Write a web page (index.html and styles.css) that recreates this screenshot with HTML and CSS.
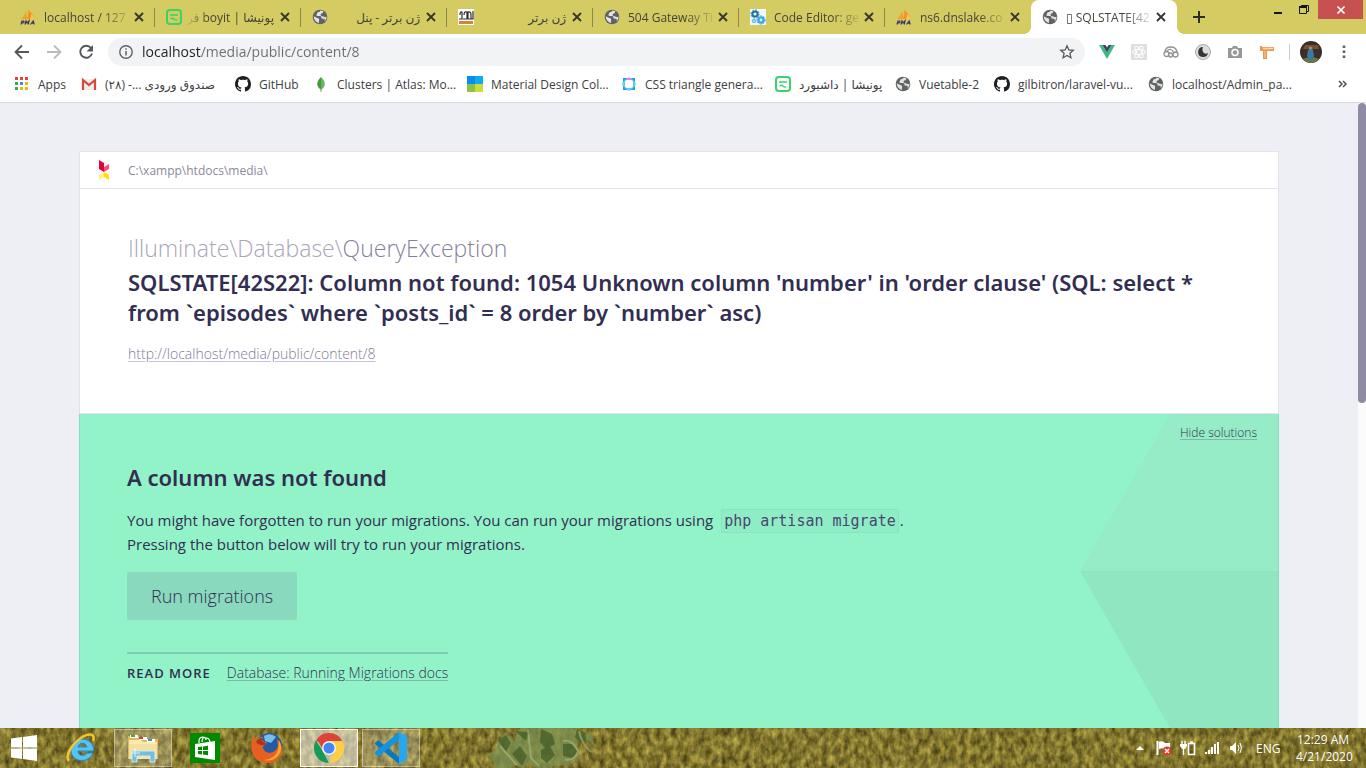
FILE: index.html
```html
<!DOCTYPE html>
<html lang="en">
<head>
<meta charset="utf-8">
<title>SQLSTATE[42S22]: Column not found</title>
<link rel="stylesheet" href="styles.css">
</head>
<body>
<svg class="sprite" aria-hidden="true">
  <symbol id="pma" viewBox="0 0 16 16">
    <path d="M1 10C3 8 5 6 6 2c1 3 1 5 1 8z" fill="#f5a030"/><path d="M7 10c1-3 2-6 1-9 4 3 6 6 7 9z" fill="#f98f1d"/><path d="M10 10c1-2 1-4 1-5 2 1 3 3 4 5z" fill="#fbc35c"/>
    <path d="M1 15.500 2 12h1.600q1 .8-.5 1.800H1.700M5 15.500 6 12l1 2 2-2-.8 3.500M10.500 15.500l2.700-3.500 1 3.500M11.600 14.200h2.500" fill="none" stroke="#35356b" stroke-width="1.200"/>
  </symbol>
  <symbol id="ponisha" viewBox="0 0 16 16">
    <rect x="1" y="1" width="14" height="14" rx="3" fill="none" stroke="#3bd26a" stroke-width="2"/>
    <path d="M4 6h8M4.500 9.500h3q1 2 3.500 1.500" fill="none" stroke="#3bd26a" stroke-width="1.500"/>
  </symbol>
  <symbol id="globe" viewBox="0 0 16 16">
    <circle cx="8" cy="8" r="7.300" fill="#5f6368"/>
    <path d="M8.500 1.500c-.5 1.500-1 1.500-2.500 1.800S5.500 5 4.500 5.500c-.5 1.500.5 1.500 2.500 1.500s2.500.5 2.500 1.800 1.500.7 2.500.9 1 1.500.3 2.800c1.500-1.200 2.300-2.900 2.200-5-1 .8-1.800.8-2.500.3-1-.7-2.500-.3-3.200-1.300s.3-2 1.500-2.200c.8-.2.6-1.500 1.200-2zM1.800 7.300c0 3 1.500 5.400 4.800 6.700 1-.7-.2-1.500.4-2.500s0-1.800-1-2.200S3.500 8.500 1.800 7.300z" fill="#e5e5df"/>
  </symbol>
  <symbol id="close" viewBox="0 0 12 12"><path d="m2 2 8 8m0-8-8 8" stroke="#33342d" stroke-width="1.800"/></symbol>
  <symbol id="github" viewBox="0 0 16 16">
    <path fill-rule="evenodd" fill="#1b1f23" d="M8 0C3.580 0 0 3.580 0 8c0 3.540 2.290 6.530 5.470 7.590.4.070.55-.17.55-.38 0-.19-.01-.82-.01-1.490-2.010.37-2.530-.49-2.690-.94-.09-.23-.48-.94-.82-1.130-.28-.15-.68-.52-.01-.53.63-.01 1.080.58 1.230.82.72 1.210 1.870.87 2.330.66.07-.52.28-.87.51-1.070-1.780-.2-3.640-.89-3.640-3.950 0-.87.31-1.590.82-2.150-.08-.2-.36-1.020.08-2.120 0 0 .67-.21 2.200.82.64-.18 1.320-.27 2-.27s1.360.09 2 .27c1.530-1.040 2.200-.82 2.200-.82.44 1.100.16 1.920.08 2.120.51.56.82 1.270.82 2.150 0 3.070-1.870 3.750-3.650 3.950.29.25.54.73.54 1.480 0 1.070-.01 1.930-.01 2.200 0 .21.15.46.55.38A8.013 8.013 0 0 0 16 8c0-4.420-3.580-8-8-8z"/>
  </symbol>
</svg>

<div class="desktop">
  <div class="browser">
    <header class="tabstrip">
      <div class="tab"><svg class="icon"><use href="#pma"/></svg><span class="tab-title fade">localhost / 127</span><button class="tab-close" aria-label="Close tab"><svg><use href="#close"/></svg></button></div>
      <div class="tab"><svg class="icon"><use href="#ponisha"/></svg><span class="tab-title fade-left" dir="rtl">پونیشا | boyit فر</span><button class="tab-close" aria-label="Close tab"><svg><use href="#close"/></svg></button></div>
      <div class="tab"><svg class="icon"><use href="#globe"/></svg><span class="tab-title" dir="rtl">ژن برتر - پنل</span><button class="tab-close" aria-label="Close tab"><svg><use href="#close"/></svg></button></div>
      <div class="tab"><svg class="icon" viewBox="0 0 16 16"><path fill="#fff" d="M0 0h16v16H0z"/><path d="M1 10h3V3q-2-1-2 3m3 4h4V3q-3-1-3 3m4 4h5V2M10 10V3q3-1 3 3v4" fill="none" stroke="#2c2c2c" stroke-width="1.200"/><path fill="#d48534" d="M1 12h14v3H1z"/></svg><span class="tab-title" dir="rtl">ژن برتر</span><button class="tab-close" aria-label="Close tab"><svg><use href="#close"/></svg></button></div>
      <div class="tab"><svg class="icon"><use href="#globe"/></svg><span class="tab-title fade">504 Gateway Ti</span><button class="tab-close" aria-label="Close tab"><svg><use href="#close"/></svg></button></div>
      <div class="tab"><svg class="icon" viewBox="0 0 16 16"><path fill="#eef7fb" d="M0 0h16v16H0z"/><circle cx="5" cy="5" r="2.600" fill="none" stroke="#19759c" stroke-width="2"/><circle cx="5" cy="5" r="4" fill="none" stroke="#19759c" stroke-dasharray="1.600 1.500"/><circle cx="11" cy="11" r="2.600" fill="none" stroke="#3ba8e0" stroke-width="2.400"/><circle cx="11" cy="11" r="4.200" fill="none" stroke="#3ba8e0" stroke-dasharray="1.600 1.500"/><circle cx="4" cy="12" r="1.500" fill="none" stroke="#6bc1ec" stroke-width="1.500"/></svg><span class="tab-title fade">Code Editor: ge</span><button class="tab-close" aria-label="Close tab"><svg><use href="#close"/></svg></button></div>
      <div class="tab"><svg class="icon"><use href="#pma"/></svg><span class="tab-title fade">ns6.dnslake.co</span><button class="tab-close" aria-label="Close tab"><svg><use href="#close"/></svg></button></div>
      <div class="tab active"><svg class="icon"><use href="#globe"/></svg><span class="tab-title fade">▯ SQLSTATE[42</span><button class="tab-close" aria-label="Close tab"><svg><use href="#close"/></svg></button></div>
      <button class="new-tab" aria-label="New tab"><svg width="14" height="14" viewBox="0 0 14 14"><path d="M7 1v12M1 7h12" stroke="#2d2d28" stroke-width="2"/></svg></button>
      <div class="window-controls">
        <button aria-label="Minimize"><svg width="10" height="12" viewBox="0 0 10 12"><path d="M1 9h8" stroke="#151515" stroke-width="2"/></svg></button>
        <button aria-label="Restore"><svg width="12" height="12" viewBox="0 0 12 12"><path d="M1.500 3.500h7v6h-7zM3.500 3V1.500h7v6H9" fill="none" stroke="#151515"/><path d="M1 3h8" stroke="#151515" stroke-width="2"/></svg></button>
        <button class="window-close" aria-label="Close"><svg width="10" height="10" viewBox="0 0 10 10"><path d="m1.500 1.500 7 7m0-7-7 7" stroke="#fff" stroke-width="1.700"/></svg></button>
      </div>
    </header>

    <div class="toolbar">
      <button class="tool" aria-label="Back"><svg width="16" height="16" viewBox="0 0 16 16"><path d="M15 8H2m6-6.500L1.500 8 8 14.500" fill="none" stroke="#54575b" stroke-width="1.800"/></svg></button>
      <button class="tool" aria-label="Forward"><svg width="16" height="16" viewBox="0 0 16 16"><path d="M1 8h13M8 1.500 14.500 8 8 14.500" fill="none" stroke="#bbbcbe" stroke-width="1.800"/></svg></button>
      <button class="tool" aria-label="Reload"><svg width="16" height="16" viewBox="0 0 16 16"><path d="M13 4A6 6 0 1 0 14 9.500" fill="none" stroke="#54575b" stroke-width="1.900"/><path fill="#54575b" d="M15 1v6.500H8.500z"/></svg></button>
      <div class="omnibox">
        <svg width="16" height="16" viewBox="0 0 16 16"><circle cx="8" cy="8" r="6.200" fill="none" stroke="#5f6368" stroke-width="1.400"/><path d="M8 7v4.500M8 4.300v1.500" stroke="#5f6368" stroke-width="1.500"/></svg>
        <input class="url" type="text" aria-label="Address" value="localhost/media/public/content/8">
        <button class="star" aria-label="Bookmark this page"><svg width="16" height="16" viewBox="0 0 16 16"><path d="m8 1.800 1.800 4.100 4.500.4-3.400 3 1 4.400L8 11.400l-3.900 2.300 1-4.400-3.400-3 4.500-.4z" fill="none" stroke="#54575b" stroke-width="1.300"/></svg></button>
      </div>
      <div class="extensions">
        <button class="tool" aria-label="Vue devtools"><svg width="16" height="16" viewBox="0 0 16 16"><path fill="#41b883" d="M0 1h3.500L8 8.500 12.500 1H16L8 15z"/><path fill="#34495e" d="M3.500 1h3L8 3.500 9.500 1h3L8 8.500z"/></svg></button>
        <button class="tool" aria-label="React tools"><svg width="16" height="16" viewBox="0 0 16 16"><path fill="#dedede" d="M0 0h16v16H0z"/><g fill="none" stroke="#fff"><ellipse cx="8" cy="8" rx="6.500" ry="2.500"/><ellipse cx="8" cy="8" rx="6.500" ry="2.500" transform="rotate(60 8 8)"/><ellipse cx="8" cy="8" rx="6.500" ry="2.500" transform="rotate(120 8 8)"/></g></svg></button>
        <button class="tool" aria-label="Clouds"><svg width="16" height="16" viewBox="0 0 16 16"><g fill="none" stroke="#929292" stroke-width="1.300"><circle cx="3.500" cy="10" r="2.500"/><circle cx="7.500" cy="11" r="2"/><circle cx="12.500" cy="10.500" r="2.500"/><path d="M2 8q0-5 6-5 5 0 6 5M4 7q4-4 7 2"/></g></svg></button>
        <button class="tool" aria-label="Dark mode"><svg width="16" height="16" viewBox="0 0 16 16"><circle cx="8" cy="8" r="7.500" fill="#ddd" stroke="#aaa"/><path fill="#363636" d="M8 3a5 5 0 1 0 5 6c-3 2-7-1-5-6z"/></svg></button>
        <button class="tool" aria-label="Screenshot"><svg width="16" height="16" viewBox="0 0 16 16"><path fill="#989898" d="M1 4h4l1-2h4l1 2h4v10H1z"/><circle cx="8" cy="8.500" r="3" fill="#989898" stroke="#fff" stroke-width="1.500"/></svg></button>
        <button class="tool" aria-label="Page ruler"><svg width="16" height="16" viewBox="0 0 16 16"><path fill="#e99b55" d="M1 2h2v1h12v4H8v8H4V7H1z"/><path d="M4 4.500h10" stroke="#ffd9a5" stroke-width="1.500"/><path d="M6 7v7" stroke="#f9c995"/></svg></button>
      </div>
      <span class="tool-divider"></span>
      <button class="avatar" aria-label="Profile"><svg width="22" height="22" viewBox="0 0 22 22"><circle cx="11" cy="11" r="11" fill="#3a3029"/><path fill="#775036" d="M5 4h13l1 4H3z"/><path fill="#667746" d="M3 18q8-4 16 0-8 8-16 0z"/><path fill="#367aa8" d="M8 9q3-3 5 0l1 6-2 4H9l-2-4z"/><circle cx="10.500" cy="7" r="1.500" fill="#b68b70"/></svg></button>
      <button class="menu" aria-label="Menu"><svg width="4" height="14" viewBox="0 0 4 14"><path d="M.7.500h2.600v2.600H.7zm0 5h2.600v2.600H.7zm0 5h2.600v2.600H.7z" fill="#5f6368"/></svg></button>
    </div>

    <nav class="bookmarks" aria-label="Bookmarks">
      <a class="bookmark" href="#"><svg class="icon" viewBox="0 0 16 16"><path fill="#ea4335" d="M1 1h3v3H1zm5 0h3v3H6zm5 0h3v3h-3z"/><path fill="#34a853" d="M1 6h3v3H1zm0 5h3v3H1z"/><path fill="#4285f4" d="M6 6h3v3H6z"/><path fill="#f9b20b" d="M11 6h3v3h-3zm-5 5h3v3H6zm5 0h3v3h-3z"/></svg><span>Apps</span></a>
      <a class="bookmark" href="#"><svg class="icon" viewBox="0 0 16 16"><path fill="#eee" d="M1 3h14v11H1z"/><path d="M2 14V4l6 5 6-5v10" fill="none" stroke="#d9473a" stroke-width="2.200"/></svg><span dir="rtl">صندوق ورودی ...- (۲۸)</span></a>
      <a class="bookmark" href="#"><svg class="icon"><use href="#github"/></svg><span>GitHub</span></a>
      <a class="bookmark" href="#"><svg class="icon" viewBox="0 0 16 16"><path fill="#429b39" d="M8 1c-5 5-5 9 0 13z"/><path fill="#67b65b" d="M8 1c5 5 5 9 0 13z"/><path d="M8 12v4" stroke="#8b9a83"/></svg><span>Clusters | Atlas: Mo...</span></a>
      <a class="bookmark" href="#"><svg class="icon" viewBox="0 0 16 16"><path fill="#0b8eeb" d="M0 0h8v8H0z"/><path fill="#10a9f4" d="M8 0h8v8H8z"/><path fill="#8bc34a" d="M0 8h8v8H0z"/><path fill="#cddc39" d="M8 8h8v8H8z"/></svg><span>Material Design Col...</span></a>
      <a class="bookmark" href="#"><svg class="icon" viewBox="0 0 16 16"><rect x="3" y="3" width="10" height="10" rx="3" fill="none" stroke="#5cc6f8" stroke-width="2"/><path fill="#259cf2" d="M2 2h4L2 6zm8 0h4v4zM2 10l4 4H2zm12 0v4h-4z"/><path fill="#f77fd2" d="m5 4 3-3 3 3z"/><path fill="#8fe2f8" d="M1 6v4l2-2zm14 0v4l-2-2zM6 15h4l-2-2z"/></svg><span>CSS triangle genera...</span></a>
      <a class="bookmark" href="#"><svg class="icon"><use href="#ponisha"/></svg><span dir="rtl">پونیشا | داشبورد</span></a>
      <a class="bookmark" href="#"><svg class="icon"><use href="#globe"/></svg><span>Vuetable-2</span></a>
      <a class="bookmark" href="#"><svg class="icon"><use href="#github"/></svg><span>gilbitron/laravel-vu...</span></a>
      <a class="bookmark" href="#"><svg class="icon"><use href="#globe"/></svg><span>localhost/Admin_pa...</span></a>
      <button class="more" aria-label="More bookmarks"><svg width="10" height="8" viewBox="0 0 10 8"><path d="m1 1 3 3-3 3m4-6 3 3-3 3" fill="none" stroke="#4d5054" stroke-width="1.500"/></svg></button>
    </nav>

    <div class="viewport">
      <main class="page">
        <article class="card">
          <div class="path-bar">
            <svg width="10" height="20" viewBox="0 0 10 20"><path fill="#e6003a" d="M0 0l5 3v9L0 9z"/><path fill="#ff4d79" d="M5 7l5-3v5l-5 3z"/><path fill="#fff082" d="M0 15l5-3v5l-5 3z"/><path fill="#ffe100" d="M5 12l5 3v5l-5-3z"/></svg>
            <span>C:\xampp\htdocs\media\</span>
          </div>
          <section class="exception">
            <div class="exception-class">Illuminate\Database\<span>QueryException</span></div>
            <h1>SQLSTATE[42S22]: Column not found: 1054 Unknown column 'number' in 'order clause' (SQL: select * from `episodes` where `posts_id` = 8 order by `number` asc)</h1>
            <a class="exception-url" href="#">http://localhost/media/public/content/8</a>
          </section>
          <section class="solution">
            <svg class="facets" viewBox="0 0 198 314" aria-hidden="true"><path fill="#96ecc6" d="M90 0h108v157H0z"/><path fill="#8fe6c0" d="M0 157h198v157H90z"/></svg>
            <button class="hide">Hide solutions</button>
            <h2>A column was not found</h2>
            <p>You might have forgotten to run your migrations. You can run your migrations using <code>php artisan migrate</code>.<br>Pressing the button below will try to run your migrations.</p>
            <button class="run">Run migrations</button>
            <div class="docs"><h3>READ MORE</h3><a href="#">Database: Running Migrations docs</a></div>
          </section>
        </article>
      </main>
      <div class="scrollbar"><div class="thumb"></div></div>
    </div>
  </div>

  <footer class="taskbar">
    <svg class="grass" aria-hidden="true">
      <filter id="blades" x="0" y="0" width="100%" height="100%" color-interpolation-filters="sRGB">
        <feTurbulence type="fractalNoise" baseFrequency="0.18 0.11" numOctaves="5" seed="8"/>
        <feColorMatrix values=".62 0 0 0 0.2  .58 0 0 0 0.17  .3 .1 0 0 -0.02  0 0 0 0 1"/>
      </filter>
      <rect width="100%" height="100%" filter="url(#blades)"/>
      <g fill="#7b9153" opacity=".75"><path d="M487 26l9-4 3-10 7-8 8 10 6-14h53l10 8 8-3 4 14-7-7-11 2 2 14-12 9-14 1-9 7-14-10-8 5-9-4-2 5h-14l-6-11z"/></g>
      <g fill="#3f5a25" opacity=".7"><path d="M498 12l8-5 5 8-5 9zM512 26l8-8 7 10-5 10zM515 3l14 1-3 9zM541 1l11 5 3 10-9 5-6-7zM541 22l9-4 5 9-8 8-6-5zM563 16l9 0 6 7-5 7-10-2zM577 1l8 3 1 8-6 3-5-6z"/></g>
      <g fill="none" stroke="#aab884" stroke-width="2" opacity=".6"><path d="M500 18q7 8 17 19M528 2q2 20 3 28l8 8m24-25q8-3 15 10-2 9-13 9m14-29q2 12 12 21"/></g>
    </svg>
    <button class="start" aria-label="Start"><svg width="26" height="26" viewBox="0 0 26 26"><path fill="#fff" d="M0 3.500 11 2v10.500H0zM12 1.900 26 0v12.500H12zM0 13.500h11V24L0 22.500zM12 13.500h14V26l-14-1.900z"/></svg></button>
    <button class="app" aria-label="Internet Explorer"><svg width="32" height="32" viewBox="0 0 32 32"><path fill="#56c3f0" stroke="#2689c6" d="M29 19H13c0 5 7 6 9 2h6C23 33 5 30 6 17 7 4 28 3 29 19zm-16-4h9c-1-5-8-5-9 0z"/><path d="M4 29c-5-5 4-18 12-23C23 1 31 1 28 9" fill="none" stroke="#f4c52c" stroke-width="2.500"/></svg></button>
    <button class="app running" aria-label="File Explorer"><svg width="32" height="32" viewBox="0 0 32 32"><path fill="#dfb95b" d="M1 4h11l2 3h17v20H1z"/><path fill="#f9ebae" d="M2 8h12l2 2h14v17H2z"/><path fill="#fff" d="M3 3h8v3H3zm9 2h8v3h-8zm8 2h8v3h-8z"/><path fill="#2db44a" d="M4 3h4v2H4z"/><path fill="#d5423b" d="M12 5h4v2h-4z"/><path fill="#4389d4" d="M21 7h4v2h-4z"/><path fill="#f3e0a0" d="M2 12h28v14H2z"/><path fill="#79bddd" stroke="#c8effb" d="M5 19h23v11h-5v-6H10v6H5z"/><path d="M8 16v9M4 21h9" stroke="#fff" opacity=".8"/></svg></button>
    <button class="app" aria-label="Store"><svg width="30" height="30" viewBox="0 0 30 30"><path fill="#008a00" d="M0 0h30v30H0z"/><path d="M9 10V8q0-4 4-4 3 0 3 3m-4 2q0-6 5-4 3 1 3 5" fill="none" stroke="#fff" stroke-width="1.200"/><path fill="#fff" d="m5 11 20-3v19L5 24z"/><path fill="#008a00" d="m8 14 4-.5V17H8zm5-.6 5-.6V17h-5zM8 18h4v3.500L8 21zm5 0h5v4.200l-5-.7z"/></svg></button>
    <button class="app" aria-label="Firefox"><svg width="32" height="32" viewBox="0 0 32 32"><circle cx="18" cy="14" r="13" fill="#2459a4"/><path fill="#77bee8" d="M13 4q6-4 12 1l-5 6-6-2z"/><path fill="#e66022" d="M2 5l4 3c2-3 4-3 6-3-2 3 0 5 4 5-1 4-4 2-4 6 3 8 13 5 15-2l-1-7c11 10 2 25-10 24C3 31-3 18 2 5z"/><path fill="#f6a52d" d="M28 8q5 9-1 16-6 6-14 4 11-1 14-10z"/><path fill="#ac351d" d="M5 10q2-4 6-4-1 4 4 5-1 3-5 2-3 0-5-3z"/></svg></button>
    <button class="app running current" aria-label="Chrome"><svg width="30" height="30" viewBox="0 0 30 30"><path fill="#dc4437" d="M2 7.500A15 15 0 0 1 28 7.500L15 15z"/><path fill="#139b59" d="M2 7.500 8.900 18.500 15 30A15 15 0 0 1 2 7.500z"/><path fill="#ffce43" d="M28 7.500A15 15 0 0 1 15 30l6.200-11.500L15 8h13.200z"/><path fill="#dc4437" d="M3 6 9 17l6-9h13l-4-5z"/><circle cx="15" cy="15" r="7" fill="#f4f4f0"/><circle cx="15" cy="15" r="5.500" fill="#4285f4"/></svg></button>
    <button class="app running" aria-label="Visual Studio Code"><svg width="32" height="32" viewBox="0 0 32 32"><path fill="#0878bf" d="m0 11 3-3 21 17v7L0 12z"/><path fill="#1593dc" d="m0 21 3 4L24 8V0L0 20z"/><path fill="#27a8ee" d="m24 0 8 4v24l-8 4z"/></svg></button>
    <div class="tray">
      <button aria-label="Show hidden icons"><svg width="8" height="4" viewBox="0 0 8 4"><path fill="#fff" d="M0 4 4 0l4 4z"/></svg></button>
      <button aria-label="Action Center"><svg width="16" height="16" viewBox="0 0 16 16"><path d="M1.500 1v14" stroke="#fff" stroke-width="2"/><path fill="#fff" d="M3 2q4-2 6 1h5v7H9Q7 7 3 9z"/><circle cx="11" cy="11" r="4.500" fill="#dc392e"/><path d="m9 9 4 4m0-4-4 4" stroke="#fff" stroke-width="1.500"/></svg></button>
      <button aria-label="Battery"><svg width="16" height="16" viewBox="0 0 16 16"><path d="M2 1v4m3-4v4M3.500 7v8" stroke="#fff" stroke-width="1.400"/><path fill="#fff" d="M0 4h7v2L5 9H2L0 6z"/><path d="M8.500 3.500h6v11h-6zM10 2h3" fill="none" stroke="#fff" stroke-width="1.600"/></svg></button>
      <button aria-label="Network"><svg width="16" height="14" viewBox="0 0 16 14"><path fill="#fff" d="M1 11h2v2H1zm3-2h2v4H4zm3-3h2v7H7zm3-3h2v10h-2zm3-2h2v12h-2z"/></svg></button>
      <button aria-label="Volume"><svg width="14" height="14" viewBox="0 0 14 14"><path fill="#fff" d="M1 5h2l4-4v12L3 9H1z"/><path d="M9 4q2 3 0 6m2-8q3 5 0 10" fill="none" stroke="#fff"/></svg></button>
      <span class="language">ENG</span>
      <time class="clock">12:29 AM<br>4/21/2020</time>
    </div>
  </footer>
</div>
</body>
</html>
```
FILE: styles.css
```css
* { box-sizing: border-box; }
body { margin: 0; font-family: "Open Sans", "DejaVu Sans", sans-serif; color: #322e52; }
button { margin: 0; padding: 0; border: 0; background: none; font: inherit; color: inherit; display: flex; align-items: center; justify-content: center; }
svg { display: block; flex: none; }
h1, h2, h3, p { margin: 0; }
.sprite { position: absolute; width: 0; height: 0; }
.icon { width: 16px; height: 16px; }

.desktop { height: 100vh; display: flex; flex-direction: column; overflow: hidden; }
.browser { flex: 1; min-height: 0; display: flex; flex-direction: column; background: #fff; }

.tabstrip { height: 34px; flex: none; display: flex; padding-left: 9px; background: #d4cb62; font-size: 12px; }
.tab { position: relative; flex: 0 1 146px; min-width: 0; display: flex; align-items: center; padding: 0 10px 0 11px; color: #45443a; }
.tab:not(.active)::after { content: ""; position: absolute; right: 0; top: 8px; width: 1px; height: 19px; background: #8d874b; }
.tab:nth-child(7)::after { display: none; }
.tab-title { flex: 1; min-width: 0; margin: 0 5px 0 8px; white-space: nowrap; }
.fade { margin-right: 0; mask-image: linear-gradient(to right, #000 65%, transparent); }
.fade-left { margin-left: 4px; mask-image: linear-gradient(to left, #000 75%, transparent); }
.tab-close svg { width: 12px; height: 12px; }
.active { background: #fff; border-radius: 8px 8px 0 0; }
.active::before, .active::after { content: ""; position: absolute; bottom: 0; width: 8px; height: 8px; }
.active::before { right: 100%; background: radial-gradient(circle at 0 0, transparent 8px, #fff 8px); }
.active::after { left: 100%; background: radial-gradient(circle at 100% 0, transparent 8px, #fff 8px); }
.new-tab { width: 44px; }
.window-controls { display: flex; margin-left: auto; padding-right: 3px; height: 19px; }
.window-controls button { width: 26px; }
.window-controls .window-close { width: 45px; margin-left: 1px; background: #c75050; }

.toolbar { height: 36px; flex: none; display: flex; align-items: center; padding: 0 6px; }
.tool { width: 32px; height: 32px; }
.omnibox { flex: 1; height: 28px; margin: 0 6px; padding: 0 10px; display: flex; align-items: center; gap: 8px; border-radius: 14px; background: #f1f3f4; }
.url { flex: 1; min-width: 0; padding: 0; border: 0; outline: 0; font: 14px/20px "Open Sans", sans-serif; color: transparent; background: linear-gradient(to right, #202124 59px, #6a6d71 59px); background-clip: text; -webkit-background-clip: text; }
.extensions { display: flex; }
.tool-divider { width: 1px; height: 16px; margin: 0 10px 0 6px; background: #c8cacd; }
.menu { width: 32px; height: 32px; margin-left: 6px; }

.bookmarks { height: 33px; flex: none; display: grid; grid-template-columns: 67px 154px 78px 154px 154px 154px 120px 99px 154px 154px 1fr; padding: 0 18px 4px 14px; border-bottom: 1px solid #d9dade; font-size: 12px; }
.bookmark { display: flex; align-items: center; gap: 8px; color: #3c4043; text-decoration: none; white-space: nowrap; }
.more { justify-content: flex-end; }

.viewport { flex: 1; min-height: 0; display: flex; overflow: hidden; background: #eeeff4; }
.page { flex: 1; min-width: 0; padding: 48px 24px; }
.card { max-width: 1200px; margin: 0 auto; background: #fff; border: 1px solid #e3e2ec; }
.path-bar { height: 37px; display: flex; align-items: center; gap: 19px; padding-left: 19px; border-bottom: 1px solid #e3e2ec; font-size: 12px; color: #8c899b; }
.exception { padding: 44px 48px 48px; border-bottom: 1px solid #e3e2ec; }
.exception-class { font-size: 23px; line-height: 30px; font-weight: 300; color: #a9a6b9; }
.exception-class span { color: #8580a0; }
h1, h2 { font-family: "Noto Sans", "Open Sans", sans-serif; font-size: 22px; line-height: 30px; font-weight: 600; }
h1 { margin: 4px 0 16px; }
.exception-url { display: block; width: fit-content; font-size: 14px; line-height: 22px; font-weight: 300; color: #7f7b99; text-decoration-color: #c5c2d8; text-underline-offset: 2px; }
.solution { position: relative; margin: 0 -1px; padding: 48px 47px; background: #92f3c9; border: solid #85dcbf; border-width: 0 1px; }
.facets { position: absolute; top: 0; right: 0; width: 198px; height: 314px; }
.hide { position: absolute; top: 10px; right: 21px; font-size: 12px; line-height: 18px; font-weight: 300; color: #322e52; text-decoration: underline; text-decoration-color: #7bb8b0; text-underline-offset: 2px; }
.solution p { margin: 16px 0; font-size: 15px; line-height: 24px; }
code { margin: 0 1px 0 4px; padding: 2px; border: 1px solid #88e3bf; border-radius: 2px; background: #8fedc5; font: 15px/18px "DejaVu Sans Mono", monospace; color: #4a4670; }
.run { height: 48px; padding: 0 24px; border-radius: 2px; background: #89d9be; font-size: 18px; font-weight: 300; }
.docs { width: fit-content; display: flex; align-items: center; gap: 16px; margin-top: 32px; padding-top: 9px; border-top: 2px solid #80cbb4; font-size: 14px; line-height: 20px; }
.docs h3 { font-size: 13px; font-weight: 600; letter-spacing: 1px; }
.docs a { font-weight: 300; color: #322e52; text-decoration-color: #7bb8b0; text-underline-offset: 2px; }
.scrollbar { width: 8px; flex: none; background: #fbfbfc; }
.thumb { height: 48%; border-radius: 4px; background: #8f8ba5; }

.taskbar { position: relative; height: 40px; flex: none; display: flex; align-items: center; gap: 4px; overflow: hidden; color: #fff; }
.grass { position: absolute; inset: 0; width: 100%; height: 100%; }
.taskbar button, .tray { position: relative; }
.start { width: 48px; height: 38px; }
.app { width: 58px; height: 38px; }
.running { border: 1px solid #ffffff66; background: #ffffff33; }
.current { border: 1px solid #ffffffdd; background: #ffffff88; }
.tray { margin-left: auto; display: flex; align-items: center; padding-right: 16px; font-size: 12px; }
.tray button { width: 24px; height: 38px; }
.language { width: 32px; margin: 0 8px; }
.clock { width: 54px; line-height: 17px; text-align: center; white-space: nowrap; }
```
